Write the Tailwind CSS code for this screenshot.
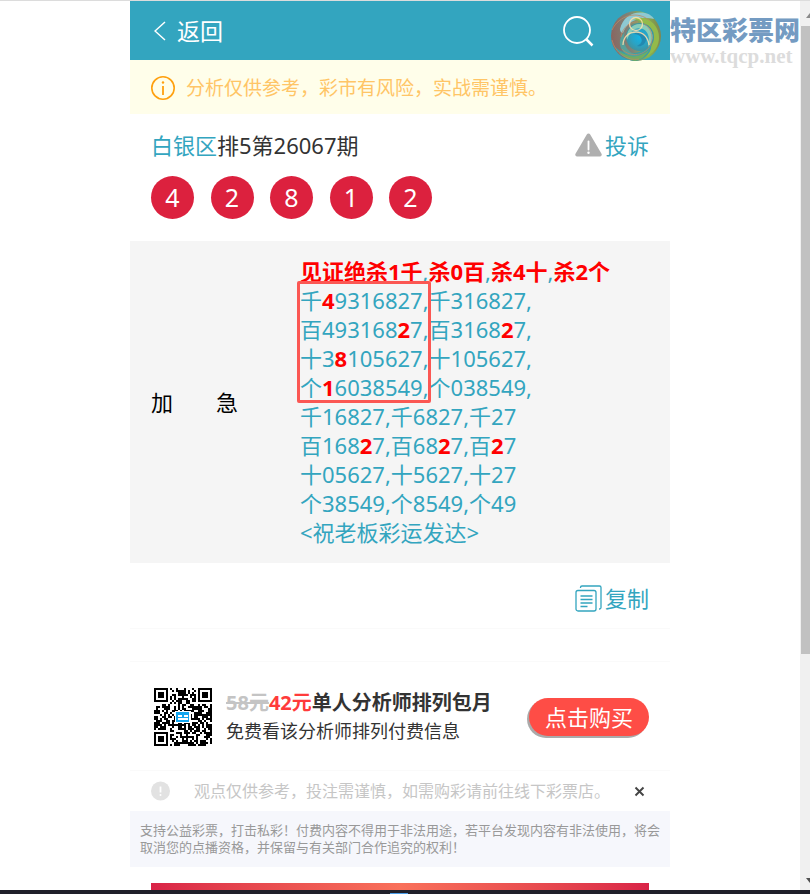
<!DOCTYPE html>
<html lang="zh-CN">
<head>
<meta charset="utf-8">
<meta name="viewport" content="width=device-width, initial-scale=1">
<title>排5第26067期</title>
<script src="https://cdn.jsdelivr.net/npm/@tailwindcss/browser@4"></script>
</head>
<body class="flex h-screen flex-col overflow-hidden border-t border-[#dcdcdc] bg-white font-['Noto_Sans','Noto_Sans_CJK_SC',sans-serif] text-[#333]">
<div class="flex min-h-0 flex-1">
  <div class="relative min-w-0 flex-1 overflow-hidden">
    <div class="mx-auto max-w-[540px]">

      <header class="flex h-[59px] items-center justify-between bg-[#33a5bf] px-[21px] text-white">
        <a href="#" class="flex items-center gap-[11px] text-[23px] leading-8">
          <svg class="ml-[3px] h-5 w-3" viewBox="0 0 12 20" fill="none" stroke="currentColor" stroke-width="1.5"><path d="M11 1 1 10l10 9"/></svg>
          返回
        </a>
        <div class="flex items-center gap-4 pr-[3px]">
          <button aria-label="搜索">
            <svg class="size-8" viewBox="0 0 32 32" fill="none" stroke="currentColor" stroke-width="1.8"><circle cx="15" cy="15" r="13"/><path d="m24.500 24.500 6 6" stroke-width="2.500"/></svg>
          </button>
          <span class="w-9"></span>
        </div>
      </header>

      <p class="flex h-[54px] items-center gap-[11px] bg-[#fffeea] px-[21px] pt-[2px] text-[19px] text-[#ffc566]">
        <svg class="size-6 shrink-0 text-[#ffa00f]" viewBox="0 0 24 24" fill="none" stroke="currentColor" stroke-width="1.600"><circle cx="12" cy="12" r="11.200"/><path d="M12 10v9" stroke-width="1.800"/><circle cx="12" cy="6.500" r="1.200" fill="currentColor" stroke="none"/></svg>
        <span>分析仅供参考，彩市有风险，实战需谨慎。</span>
      </p>

      <section class="px-[21px] pt-[15px] pb-[22px]">
        <div class="mb-[15px] flex items-center justify-between text-[22px] leading-8">
          <h1><a href="#" class="text-[#33a5bf]">白银区</a>排5第26067期</h1>
          <a href="#" class="flex items-center gap-[3px] text-[#33a5bf]">
            <svg class="h-6 w-[27px]" viewBox="0 0 27 24"><path d="M11.800 1.500a2 2 0 0 1 3.400 0l11.300 19.300a1.800 1.800 0 0 1-1.600 2.700H2.100A1.800 1.800 0 0 1 .5 20.800z" fill="#afafaf"/><path d="M13.500 8.500v8" stroke="#fff" stroke-width="1.800" stroke-linecap="round"/><circle cx="13.500" cy="19.700" r="1.200" fill="#fff"/></svg>
            投诉
          </a>
        </div>
        <ul class="flex w-[281px] justify-between text-[25px] text-white">
          <li class="flex size-[43px] items-center justify-center rounded-full bg-[#dc213e]">4</li>
          <li class="flex size-[43px] items-center justify-center rounded-full bg-[#dc213e]">2</li>
          <li class="flex size-[43px] items-center justify-center rounded-full bg-[#dc213e]">8</li>
          <li class="flex size-[43px] items-center justify-center rounded-full bg-[#dc213e]">1</li>
          <li class="flex size-[43px] items-center justify-center rounded-full bg-[#dc213e]">2</li>
        </ul>
      </section>

      <section class="flex items-center bg-[#f5f5f5] px-[21px] py-4 text-[22px] leading-[29px]">
        <h2 class="flex w-[149px] gap-[43px] text-black"><span>加</span><span>急</span></h2>
        <div class="relative whitespace-nowrap text-[#33a5bf] [&_b]:text-[#f00]">
          <p><b>见证绝杀1千</b>,<b>杀0百</b>,<b>杀4十</b>,<b>杀2个</b></p>
          <p>千<b>4</b>9316827,千316827,</p>
          <p>百493168<b>2</b>7,百3168<b>2</b>7,</p>
          <p>十3<b>8</b>105627,十105627,</p>
          <p>个<b>1</b>6038549,个038549,</p>
          <p>千16827,千6827,千27</p>
          <p>百168<b>2</b>7,百68<b>2</b>7,百<b>2</b>7</p>
          <p>十05627,十5627,十27</p>
          <p>个38549,个8549,个49</p>
          <p>&lt;祝老板彩运发达&gt;</p>
          <div class="absolute top-6 -left-[3px] h-[122px] w-[134px] rounded-[2px] border-3 border-[#fb5753]"></div>
        </div>
      </section>

      <div class="flex justify-end border-b border-[#fafafa] px-[21px] pt-[19px] pb-[14px]">
        <button class="flex items-center gap-[3px] text-[22px] leading-8 text-[#33a5bf]">
          <svg class="size-[27px]" viewBox="0 0 27 27" fill="none" stroke="currentColor" stroke-width="1.300"><rect x="1" y="5.500" width="20" height="20.500" rx="2"/><path d="M5.500 3V2.500A1.500 1.500 0 0 1 7 1h17.500A1.500 1.500 0 0 1 26 2.500v20a1.500 1.500 0 0 1-1.500 1.500H24"/><path d="M5.500 11h12M5.500 14.500h12M5.500 18h12M5.500 21.500h7" stroke-width="1.500"/></svg>
          复制
        </button>
      </div>

      <section class="mt-8 flex items-center border-y border-[#fafafa] px-[21px] pt-[26px] pb-6">
        <svg id="qr" class="mx-[3px] size-[58px] shrink-0" viewBox="0 0 29 29" shape-rendering="crispEdges" role="img" aria-label="二维码"><path fill="#000"/><path d="M10.500 11.500h8v6h-8z" fill="#fff"/><path d="M11 12h6.500v5H11z" fill="#12a5ee"/><path d="M12 14h2m1 0h2M12 15.500h5" stroke="#fff" stroke-width=".6"/></svg>
        <div class="ml-[11px] flex-1 whitespace-nowrap">
          <p class="text-[20px] leading-[29px] font-bold"><s class="text-[#c4c4c4]">58元</s><span class="text-[#ff3b3b]">42元</span>单人分析师排列包月</p>
          <p class="text-lg leading-[29px]">免费看该分析师排列付费信息</p>
        </div>
        <button class="rounded-full bg-[#fe4d46] px-4 py-[3px] text-[22px] leading-8 text-white shadow-[-2px_2px_0_#aaa]">点击购买</button>
      </section>

      <div class="flex items-center px-[21px] py-2 text-base leading-6 text-[#c6c6c6]">
        <svg class="mr-[23px] size-5 shrink-0" viewBox="0 0 20 20"><circle cx="9.500" cy="10" r="9.500" fill="#e2e2e2"/><path d="M9.500 5.500v6" stroke="#fff" stroke-width="1.800"/><circle cx="9.500" cy="13.900" r="1" fill="#fff"/></svg>
        <p class="flex-1 whitespace-nowrap">观点仅供参考，投注需谨慎，如需购彩请前往线下彩票店。</p>
        <button aria-label="关闭" class="mr-1">
          <svg class="size-[11px]" viewBox="0 0 11 11" stroke="#444" stroke-width="1.900"><path d="m1.500 1.500 8 8m0-8-8 8"/></svg>
        </button>
      </div>

      <p class="bg-[#f6f7fc] px-[10px] py-[11px] text-[13px] leading-[17px] text-[#999]">支持公益彩票，打击私彩！付费内容不得用于非法用途，若平台发现内容有非法使用，将会取消您的点播资格，并保留与有关部门合作追究的权利！</p>

      <div class="mx-[21px] mt-4 h-20 bg-linear-to-r from-[#d92347] via-[#f9705a] to-[#d92347]"></div>
    </div>

    <div class="absolute top-2 right-0 flex">
      <svg class="size-[54px]" viewBox="0 0 54 54" aria-hidden="true">
        <defs>
          <linearGradient id="rim" x1="0" y1=".5" x2="1" y2=".4"><stop offset="0" stop-color="#8a6660"/><stop offset=".4" stop-color="#7d857a"/><stop offset=".7" stop-color="#86b552"/><stop offset="1" stop-color="#7f8450"/></linearGradient>
          <radialGradient id="core"><stop offset="0" stop-color="#12b4e6"/><stop offset=".6" stop-color="#2aa3c4"/><stop offset="1" stop-color="#3f93a0"/></radialGradient>
        </defs>
        <circle cx="28" cy="27" r="25" fill="url(#rim)"/>
        <path d="M12 20C15 8 25 2 37 4c5 1 8 4 9 6-12-3-26 0-31 14-2 0-3-2-3-4z" fill="#8ec9d2"/>
        <path d="M24 10c14-5 28 5 27 20-1 11-9 18-19 18 9-4 14-12 12-21-2-10-10-16-20-17z" fill="#93ba4a"/>
        <path d="M7 38c10 9 26 9 36-4 2 8-5 16-15 18C19 52 11 46 7 38z" fill="#3a9fa6"/>
        <path d="M11 42c9 7 21 7 30-1-3 6-8 10-14 11-6-1-12-4-16-10z" fill="#70ad62"/>
        <circle cx="32" cy="28" r="14" fill="url(#core)"/>
        <path d="M19 31c-2-11 8-19 18-15 9 4 10 16 3 22 2-8 1-15-5-18-7-3-13 2-16 11z" fill="#88cdb8"/>
        <path d="M26 25c5-5 13-1 12 6-1 5-5 7-9 6 4-2 6-5 4-8-1-3-4-4-7-4z" fill="#2389b0"/>
        <path d="M17 23c-4 11 3 23 15 23-6 3-14 1-18-5-4-7-2-14 3-18z" fill="#56a19a"/>
        <path d="M4 21C11 6 30 1 42 12M14 40c8 9 24 7 29-5 3-9-1-17-7-20M4 31c3 13 15 21 27 19M13 28c1-9 9-16 17-15" fill="none" stroke="#bd8963" stroke-width=".8"/>
        <g fill="none" stroke="#ffe0ae" stroke-opacity=".85" stroke-width="1.300"><circle cx="28" cy="15" r="6.500"/><path d="M15 36c0-8 6-13 13-13s12 5 13 13"/></g>
      </svg>
      <div class="ml-2 pt-[3px]">
        <p class="text-[26px] leading-9 font-black text-[#749bc2]">特区彩票网</p>
        <p class="font-['Liberation_Serif',serif] text-[21px] leading-4 font-bold text-[#dcdcdc]">www.tqcp.net</p>
      </div>
    </div>
  </div>

  <div class="flex w-[10px] shrink-0 flex-col bg-[#f0f0f0] pl-px" aria-hidden="true">
    <svg class="mt-3 mb-2 ml-auto h-[5px] w-1" viewBox="0 0 4 5"><path d="M4 0v5H0z" fill="#8a8a8a"/></svg>
    <div class="h-[70.600%] bg-[#c1c1c1]"></div>
    <svg class="mt-auto mb-[7px] ml-auto h-[5px] w-1" viewBox="0 0 4 5"><path d="M0 0h4v5z" fill="#505050"/></svg>
  </div>
</div>
<div class="h-1 shrink-0 bg-[#20202a]"><div class="mx-auto h-1 w-[30px] pt-[3px]"><div class="mr-3 h-px bg-[#4a9de8]"></div></div></div>

<script>
  // Fills the QR code modules: three finder squares, the rest from a fixed seed.
  let seed = 26067, d = '';
  const corners = [[0, 0], [22, 0], [0, 22]];
  for (let y = 0; y < 29; y++) for (let x = 0; x < 29; x++) {
    seed = (seed * 1103515245 + 12345) % 2147483648;
    let on = (seed >> 16) % 100 < 52;
    for (const [cx, cy] of corners) {
      const r = Math.max(Math.abs(x - cx - 3), Math.abs(y - cy - 3));
      if (r <= 4) on = r === 3 || r < 2;
    }
    if (on) d += `M${x} ${y}h1v1h-1z`;
  }
  document.querySelector('#qr path').setAttribute('d', d);
</script>
</body>
</html>
